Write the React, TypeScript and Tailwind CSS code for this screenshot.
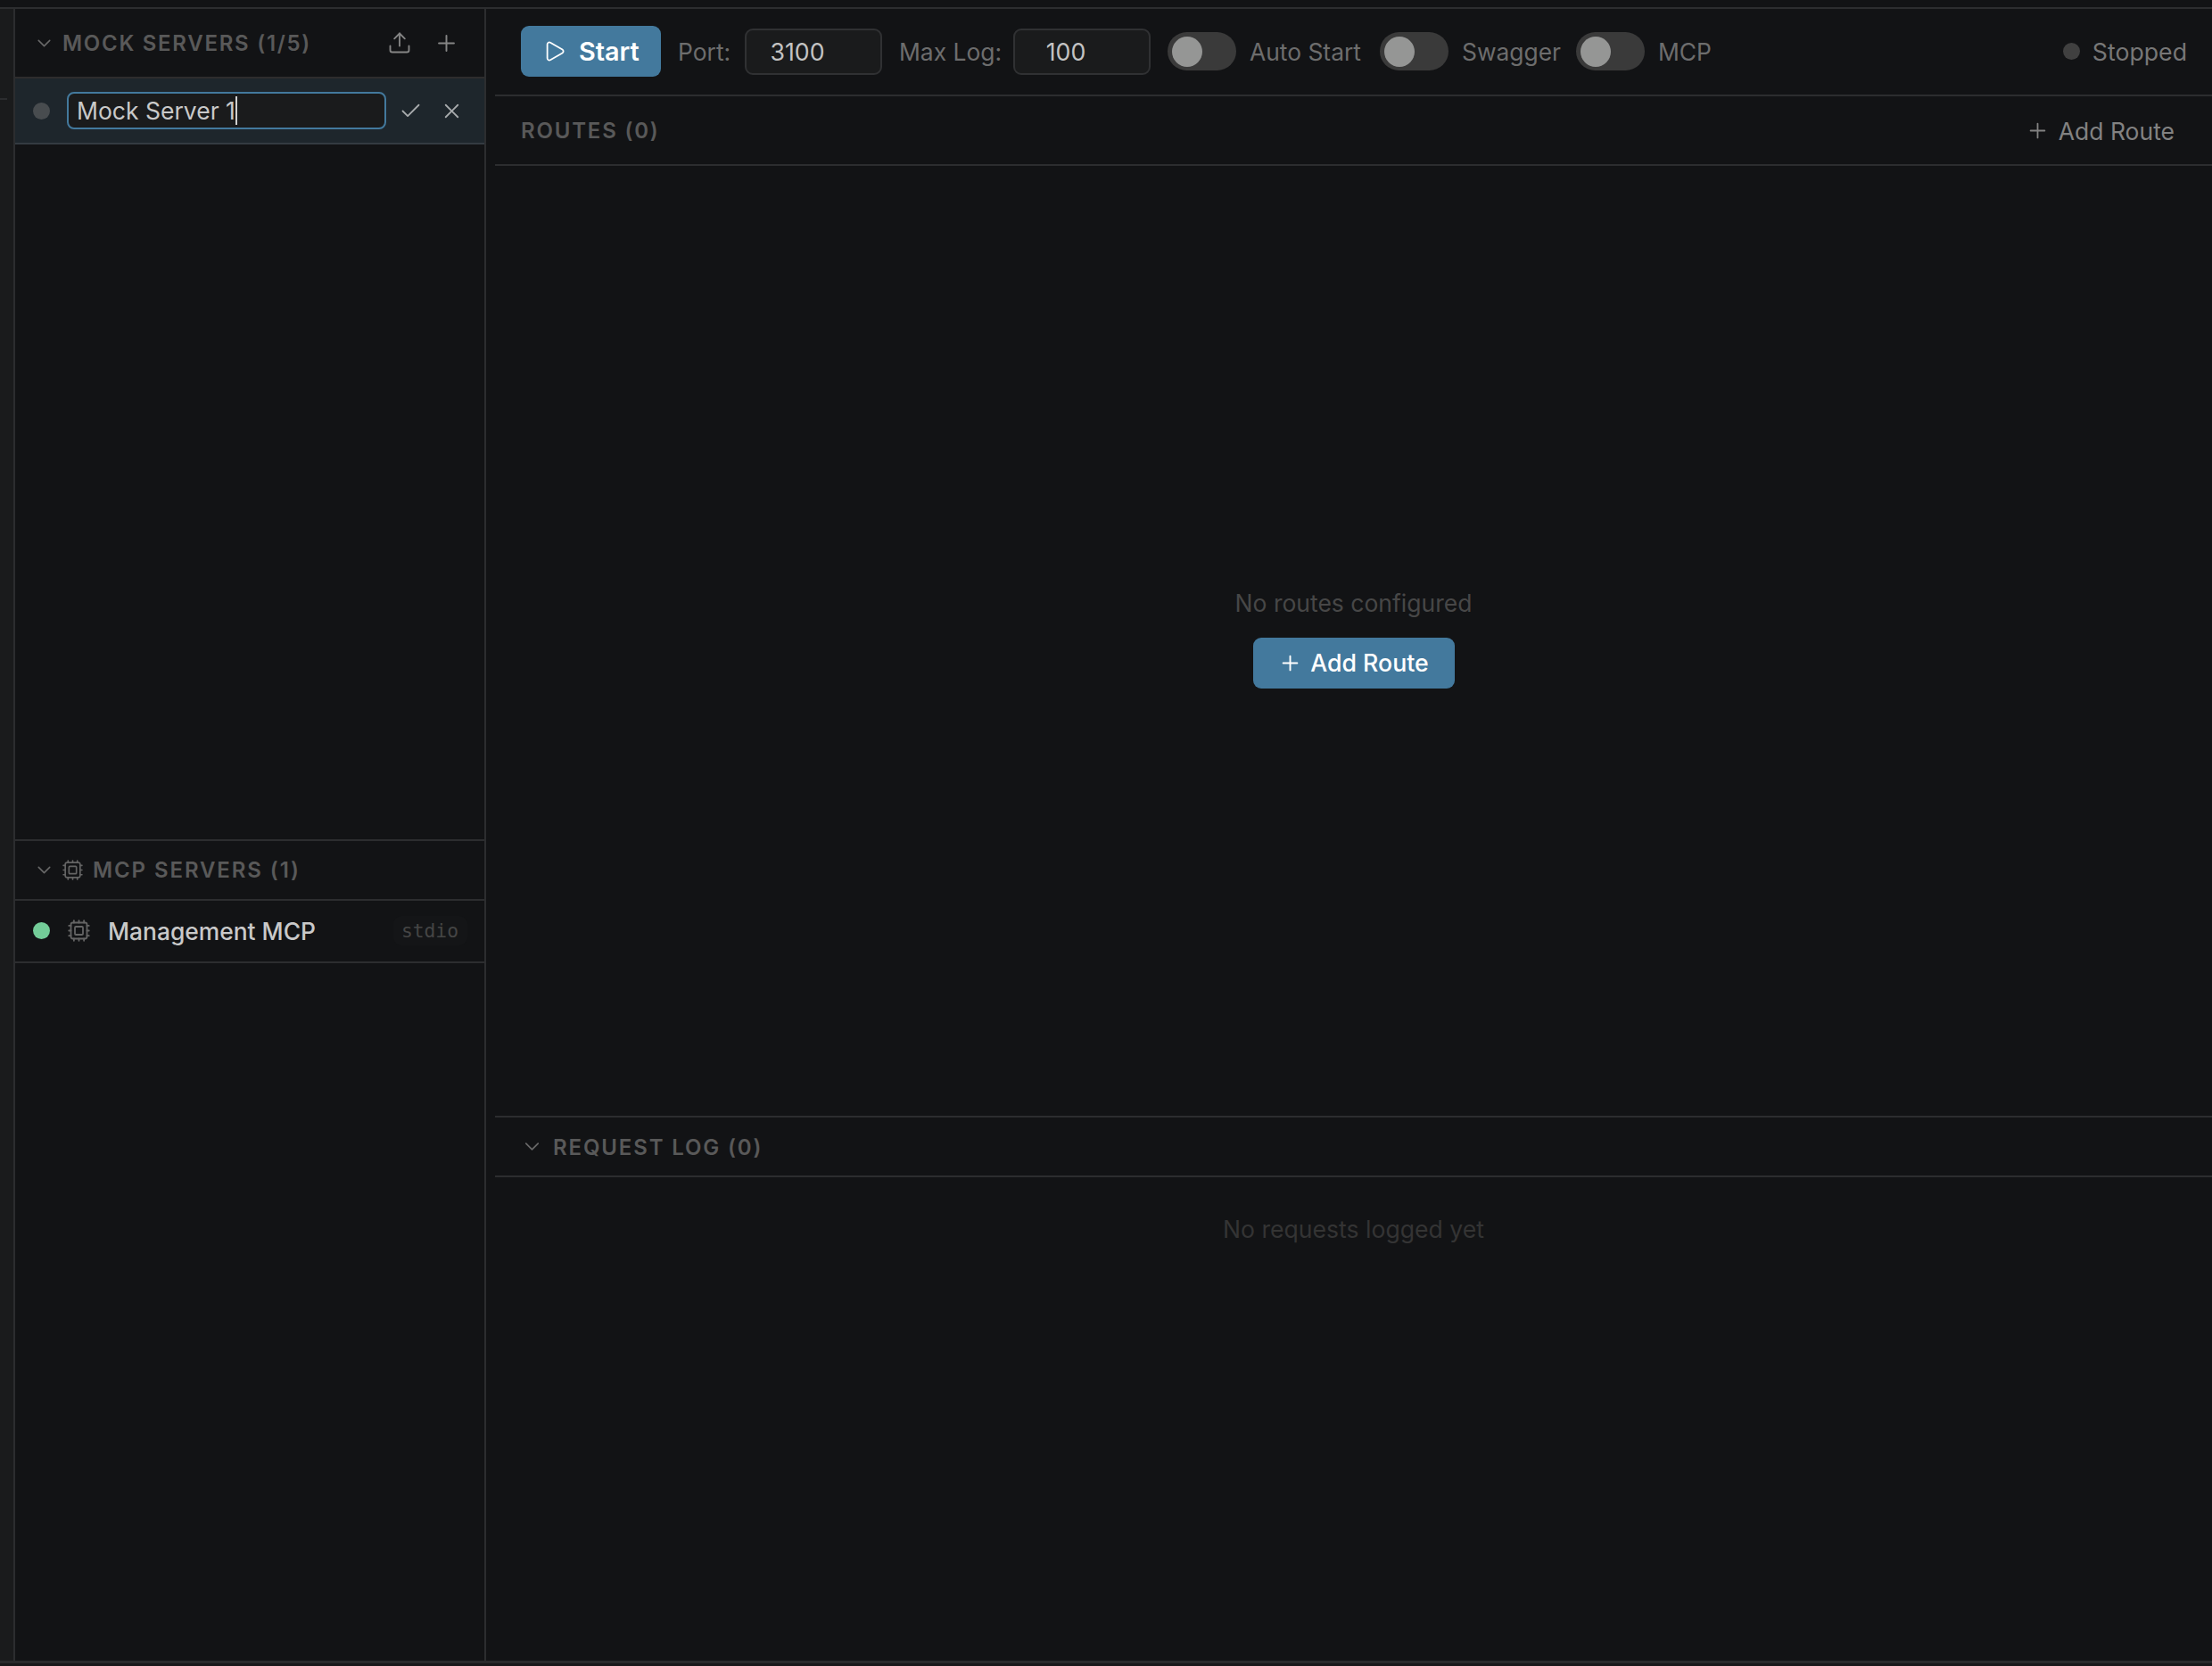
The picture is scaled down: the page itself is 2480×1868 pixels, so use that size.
import React, { useState } from "react";
import { Check, ChevronDown, Cpu, Play, Plus, Upload, X } from "lucide-react";

type ToggleKey = "autoStart" | "swagger" | "mcp";

const TOGGLES: { key: ToggleKey; label: string; width: string }[] = [
  { key: "autoStart", label: "Auto Start", width: "w-[127px]" },
  { key: "swagger", label: "Swagger", width: "w-[109px]" },
  { key: "mcp", label: "MCP", width: "w-[61px]" },
];

function SectionTitle({ tracking = "tracking-[1.9px]", children }: { tracking?: string; children: React.ReactNode }) {
  return (
    <h2 className={"whitespace-nowrap text-[24px] font-semibold leading-[30px] text-[#595959] " + tracking}>
      {children}
    </h2>
  );
}

function NumberField({
  label,
  labelWidth,
  value,
  onChange,
}: {
  label: string;
  labelWidth: string;
  value: string;
  onChange: (v: string) => void;
}) {
  return (
    <label className="flex items-center gap-[14px] text-[#6d6d6d]">
      <span className={"whitespace-nowrap text-[26.4px] " + labelWidth}>{label}</span>
      <input
        value={value}
        onChange={(e) => onChange(e.target.value)}
        className="h-[52px] w-[154px] rounded-[9px] border-2 border-[#303133] bg-[#1a1b1c] pr-[36px] text-center text-[#c3c3c3] outline-none"
      />
    </label>
  );
}

function Toggle({ on, onClick }: { on: boolean; onClick: () => void }) {
  return (
    <button
      type="button"
      role="switch"
      aria-checked={on}
      onClick={onClick}
      className={
        "flex h-[43px] w-[77px] items-center rounded-full px-[5px] " +
        (on ? "justify-end bg-[#43799d]" : "justify-start bg-[#3a3a3a]")
      }
    >
      <span className="size-[34px] rounded-full bg-[#959695]" />
    </button>
  );
}

function Sidebar() {
  const [name, setName] = useState("Mock Server 1");

  return (
    <aside className="flex w-[530px] shrink-0 flex-col border-x-2 border-[#2c2d2f]">
      {/* mock servers */}
      <section className="flex h-[931px] flex-col">
        <header className="flex h-[78px] shrink-0 items-center border-b-2 border-[#2e2d2d] pl-[20px] pr-[28px]">
          <ChevronDown size={25} strokeWidth={1.5} className="text-[#686868]" />
          <div className="ml-[8px] flex-1 pt-px">
            <SectionTitle tracking="tracking-[1.72px]">MOCK SERVERS (1/5)</SectionTitle>
          </div>
          <Upload size={28} strokeWidth={1.6} className="text-[#858585]" />
          <Plus size={29} strokeWidth={1.6} className="ml-[24px] text-[#858585]" />
        </header>

        <div className="flex h-[74px] shrink-0 items-center border-b-2 border-[#343b41] bg-[#1e262c] pl-[20px] pr-[23px]">
          <span className="size-[19px] rounded-full bg-[#484c4f]" />
          <div className="ml-[19px] flex h-[42px] w-[358px] items-center rounded-[8px] border-2 border-[#43799d] bg-[#1a1b1c] pl-[9px]">
            <span
              contentEditable
              suppressContentEditableWarning
              onBlur={(e) => setName(e.currentTarget.textContent ?? "")}
              className="whitespace-nowrap text-[26.5px] text-[#c9c9c9] outline-none"
            >
              {name}
            </span>
            <span className="h-[32px] w-[2px] bg-[#d0d0d0]" />
          </div>
          <Check size={27} strokeWidth={1.6} className="ml-[14px] text-[#a8abad]" />
          <X size={27} strokeWidth={1.6} className="ml-auto text-[#a8abad]" />
        </div>
      </section>

      {/* mcp servers */}
      <section className="flex flex-1 flex-col">
        <header className="flex h-[69px] items-center border-y-2 border-[#2c2d2f] pl-[20px]">
          <ChevronDown size={25} strokeWidth={1.5} className="text-[#686868]" />
          <Cpu size={25} strokeWidth={1.6} className="ml-[7px] mr-[10px] text-[#646464]" />
          <SectionTitle>MCP SERVERS (1)</SectionTitle>
        </header>
        <div className="flex h-[70px] items-center border-b-2 border-[#2c2d2f] pb-px pl-[20px] pr-[19px]">
          <span className="size-[19px] rounded-full bg-[#73cc98]" />
          <Cpu size={27} strokeWidth={1.6} className="ml-[19px] text-[#646464]" />
          <span className="ml-[19px] flex-1 text-[26.4px] font-medium text-[#c9c9c9]">Management MCP</span>
          <span className="flex h-[33px] items-center rounded-[9px] bg-[#141517] pl-[9px] pr-[10px] font-['DejaVu_Sans_Mono',monospace] text-[21.3px] text-[#454545]">
            stdio
          </span>
        </div>
      </section>
    </aside>
  );
}

export default function App() {
  const [port, setPort] = useState("3100");
  const [maxLog, setMaxLog] = useState("100");
  const [flags, setFlags] = useState<Record<ToggleKey, boolean>>({
    autoStart: false,
    swagger: false,
    mcp: false,
  });

  return (
    <div className="flex h-[1868px] w-[2480px] flex-col overflow-hidden bg-[#19181a] font-['Inter',sans-serif] text-[26.7px] leading-[32px]">
      <div className="h-[10px] shrink-0 border-b-2 border-[#2c2d2f] bg-[#121315]" />

      <div className="flex min-h-0 flex-1 bg-[#121315]">
        {/* edge of the activity bar */}
        <div className="w-[15px] shrink-0 bg-[#1a1b1c] pt-[100px]">
          <div className="h-[2px] w-[8px] bg-[#2c2d2f]" />
        </div>

        <Sidebar />

        <main className="ml-[10px] flex min-w-0 flex-1 flex-col">
          <div className="flex h-[98px] shrink-0 items-center gap-[19px] border-b-2 border-[#2c2d2f] pb-px pl-[29px] pr-[28px]">
            <button
              type="button"
              className="flex h-[57px] w-[157px] items-center rounded-[9px] bg-[#43799d] pl-[24px] text-[28.8px] font-semibold text-white"
            >
              <Play size={27} strokeWidth={1.6} className="mr-[14px]" />
              Start
            </button>
            <NumberField label="Port:" labelWidth="w-[61px]" value={port} onChange={setPort} />
            <NumberField label="Max Log:" labelWidth="w-[114px]" value={maxLog} onChange={setMaxLog} />
            {TOGGLES.map((t) => (
              <div key={t.key} className="flex items-center gap-[15px] text-[#6d6d6d]">
                <Toggle on={flags[t.key]} onClick={() => setFlags({ ...flags, [t.key]: !flags[t.key] })} />
                <span className={"whitespace-nowrap text-[26.4px] " + t.width}>{t.label}</span>
              </div>
            ))}
            <div className="ml-auto flex items-center gap-[14px] text-[#777777]">
              <span className="size-[19px] rounded-full bg-[#404040]" />
              Stopped
            </div>
          </div>

          <div className="flex h-[78px] shrink-0 items-center justify-between border-b-2 border-[#2c2d2f] pl-[29px] pr-[42px]">
            <div className="pt-[2px]">
              <SectionTitle tracking="tracking-[1.8px]">ROUTES (0)</SectionTitle>
            </div>
            <button type="button" className="flex items-center gap-[10px] pt-px text-[26.5px] text-[#828282]">
              <Plus size={27} strokeWidth={1.6} />
              Add Route
            </button>
          </div>

          <div className="flex h-[1065px] shrink-0 flex-col items-center justify-center gap-[23px] pb-[6px]">
            <p className="text-[26.5px] text-[#474747]">No routes configured</p>
            <button
              type="button"
              className="flex h-[57px] w-[226px] items-center justify-center gap-[9px] rounded-[9px] bg-[#43799d] font-medium text-white"
            >
              <Plus size={27} strokeWidth={1.7} />
              Add Route
            </button>
          </div>

          <div className="flex h-[69px] shrink-0 items-center border-y-2 border-[#2c2d2f] pl-[28px]">
            <ChevronDown size={27} strokeWidth={1.5} className="mr-[10px] text-[#686868]" />
            <div className="pt-[2px]">
              <SectionTitle tracking="tracking-[1.85px]">REQUEST LOG (0)</SectionTitle>
            </div>
          </div>
          <p className="pt-[42px] text-center text-[26.6px] text-[#343434]">No requests logged yet</p>
        </main>
      </div>

      <div className="h-[6px] shrink-0 border-t-3 border-[#2a2a2c]" />
    </div>
  );
}
